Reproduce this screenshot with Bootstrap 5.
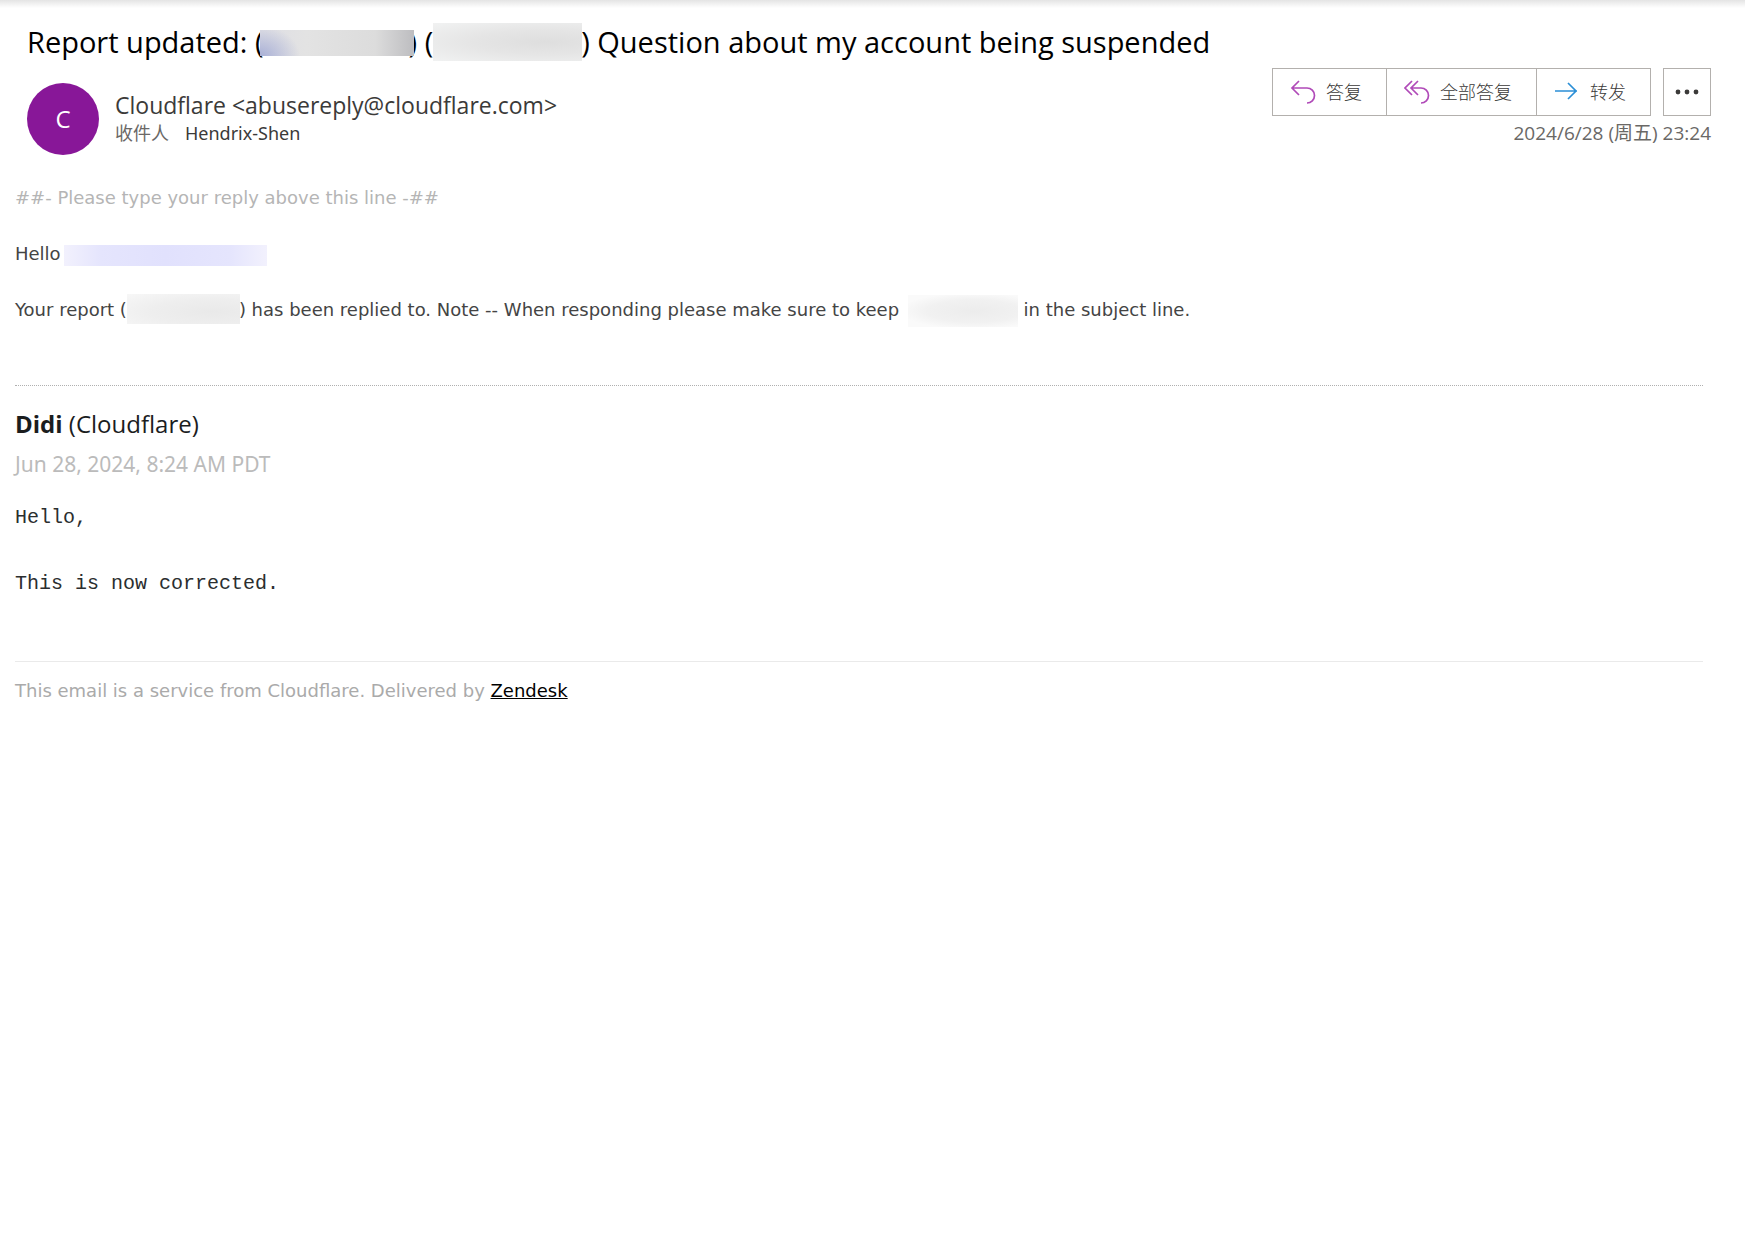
<!DOCTYPE html>
<html lang="zh-CN">
<head>
<meta charset="utf-8">
<meta name="viewport" content="width=device-width, initial-scale=1">
<title>Report updated</title>
<link href="https://cdn.jsdelivr.net/npm/bootstrap@5.3.0/dist/css/bootstrap.min.css" rel="stylesheet">
<style>
  body { font-family: "Open Sans", "Noto Sans CJK SC", sans-serif; background: #fff; color: #3b3a39; }
  .top-shade { height: 8px; background: linear-gradient(#e4e4e4, #fff); }
  .mail-head { padding: 14px 34px 0 27px; }
  .mail-title { font-size: 29px; line-height: 40px; font-weight: 400; color: #000; }
  .avatar { width: 72px; height: 72px; margin-top: 21px; font-size: 24px; background: #881798; color: #fff; }
  .who { margin-top: 28px; }
  .sender { font-size: 23px; line-height: 30px; }
  .recipient { font-size: 18px; line-height: 26px; font-family: "Noto Sans", "Noto Sans CJK SC", sans-serif; }
  .soft { color: #6a6866; }
  .tools { padding-top: 6px; }
  .acts { gap: 12px; }
  .acts .btn { --bs-btn-border-radius: 0; --bs-btn-border-color: #b3b0ad; --bs-btn-color: #3b3a39; --bs-btn-hover-border-color: #b3b0ad; --bs-btn-hover-bg: #f3f2f1;
    height: 48px; font-size: 18px; line-height: 26px; font-weight: 300; padding: 0 24px 0 17px; }
  .acts .more-btn { width: 48px; padding: 0; }
  .stamp { font-size: 19px; line-height: 26px; margin-top: 4px; }
  .mail-body { padding: 29px 42px 0 15px; font-family: "DejaVu Sans", sans-serif; font-size: 18px; line-height: 28px; color: #444; }
  .mail-body > p { margin-bottom: 28px; }
  .hint { color: #b5b5b5; }
  .blot { display: inline-block; vertical-align: middle; position: relative; }
  .blot-a { width: 154px; height: 26px; margin: -4px -5px 0 -4px; background: radial-gradient(ellipse 40px 30px at 0 100%, #a9b0d6, #a9b0d600), linear-gradient(90deg, #dedee4, #e3e3e3 30%, #dcdcdc 75%, #bdbdc0); }
  .blot-b { width: 149px; height: 38px; margin: -8px -1px -2px 0; background: radial-gradient(ellipse at 75% 50%, #dedede, #e5e5e5 45%, #f1f2f2); }
  .blot-c { width: 203px; height: 21px; margin-left: -2px; background: linear-gradient(90deg, #f2f1fd, #e5e5fd 18%, #e1e1fd 50%, #e5e5fd 82%, #f2f1fd); }
  .blot-d { width: 113px; height: 30px; margin: -8px -1px -4px 0; background: radial-gradient(ellipse at 75% 60%, #e9e9e9, #eeeeee 50%, #f7f7f7); }
  .blot-e { width: 110px; height: 32px; margin: -6px 0 -6px 3px; background: radial-gradient(ellipse at 60% 50%, #ececec, #f1f1f1 50%, #fafafa 80%); }
  .thread { border-top: 1px dotted #b0b0b0; margin-top: 61px; padding-top: 20px; font-family: "Open Sans", sans-serif; }
  .author { font-size: 24px; line-height: 36px; color: #1b1d1e; }
  .posted { font-family: "Noto Sans", sans-serif; font-size: 21px; line-height: 28px; margin-top: 8px; color: #bbb; }
  .message { font-family: "Liberation Mono", monospace; font-size: 20px; line-height: 33px; margin-top: 23px; color: #2b2e2f; }
  .foot { border-top: 1px solid #eaeaea; margin-top: 61px; padding-top: 15px; color: #aaa; }
  .foot a { color: #000; }
</style>
</head>
<body>
<div class="top-shade"></div>
<header class="mail-head">
  <h1 class="mail-title mb-0">Report updated: (<span class="blot blot-a"></span>) (<span class="blot blot-b"></span>) Question about my account being suspended</h1>
  <div class="d-flex justify-content-between">
    <div class="d-flex align-items-start">
      <div class="avatar rounded-circle d-flex align-items-center justify-content-center">C</div>
      <div class="who ms-3">
        <div class="sender">Cloudflare &lt;abusereply@cloudflare.com&gt;</div>
        <div class="recipient"><span class="soft me-3">收件人</span>Hendrix-Shen</div>
      </div>
    </div>
    <div class="tools d-flex flex-column align-items-end">
      <div class="acts d-flex">
        <div class="btn-group">
          <button type="button" class="btn d-flex align-items-center">
            <svg class="me-2" width="28" height="26" viewBox="0 0 28 26" fill="none" stroke="#b04ab8" stroke-width="1.7"><path d="M9 2 2 9l7 7M2 9h15a7 7 0 0 1 0 15"/></svg>答复</button>
          <button type="button" class="btn d-flex align-items-center">
            <svg class="me-2" width="28" height="26" viewBox="0 0 28 26" fill="none" stroke="#b04ab8" stroke-width="1.7"><path d="M8 2 1 9l7 7M14 2 7 9l7 7M7 9h10a7 7 0 0 1 0 15"/></svg>全部答复</button>
          <button type="button" class="btn d-flex align-items-center">
            <svg class="me-2" width="28" height="26" viewBox="0 0 28 26" fill="none" stroke="#2b8fd6" stroke-width="1.7"><path d="M1 12h22M14 4l8 8-8 8"/></svg>转发</button>
        </div>
        <button type="button" class="btn more-btn d-flex align-items-center justify-content-center" aria-label="更多">
          <svg width="24" height="6" viewBox="0 0 24 6" fill="#3b3a39"><circle cx="3" cy="3" r="2.4"/><circle cx="12" cy="3" r="2.4"/><circle cx="21" cy="3" r="2.4"/></svg>
        </button>
      </div>
      <div class="stamp soft">2024/6/28 (周五) 23:24</div>
    </div>
  </div>
</header>
<main class="mail-body">
  <p class="hint">##- Please type your reply above this line -##</p>
  <p>Hello <span class="blot blot-c"></span></p>
  <p>Your report (<span class="blot blot-d"></span>) has been replied to. Note -- When responding please make sure to keep <span class="blot blot-e"></span> in the subject line.</p>
  <section class="thread">
    <div class="author"><strong>Didi</strong> (Cloudflare)</div>
    <div class="posted">Jun 28, 2024, 8:24 AM PDT</div>
    <div class="message">Hello,<br><br>This is now corrected.</div>
  </section>
  <footer class="foot">This email is a service from Cloudflare. Delivered by <a href="#">Zendesk</a></footer>
</main>
<script src="https://cdn.jsdelivr.net/npm/bootstrap@5.3.0/dist/js/bootstrap.bundle.min.js"></script>
</body>
</html>
